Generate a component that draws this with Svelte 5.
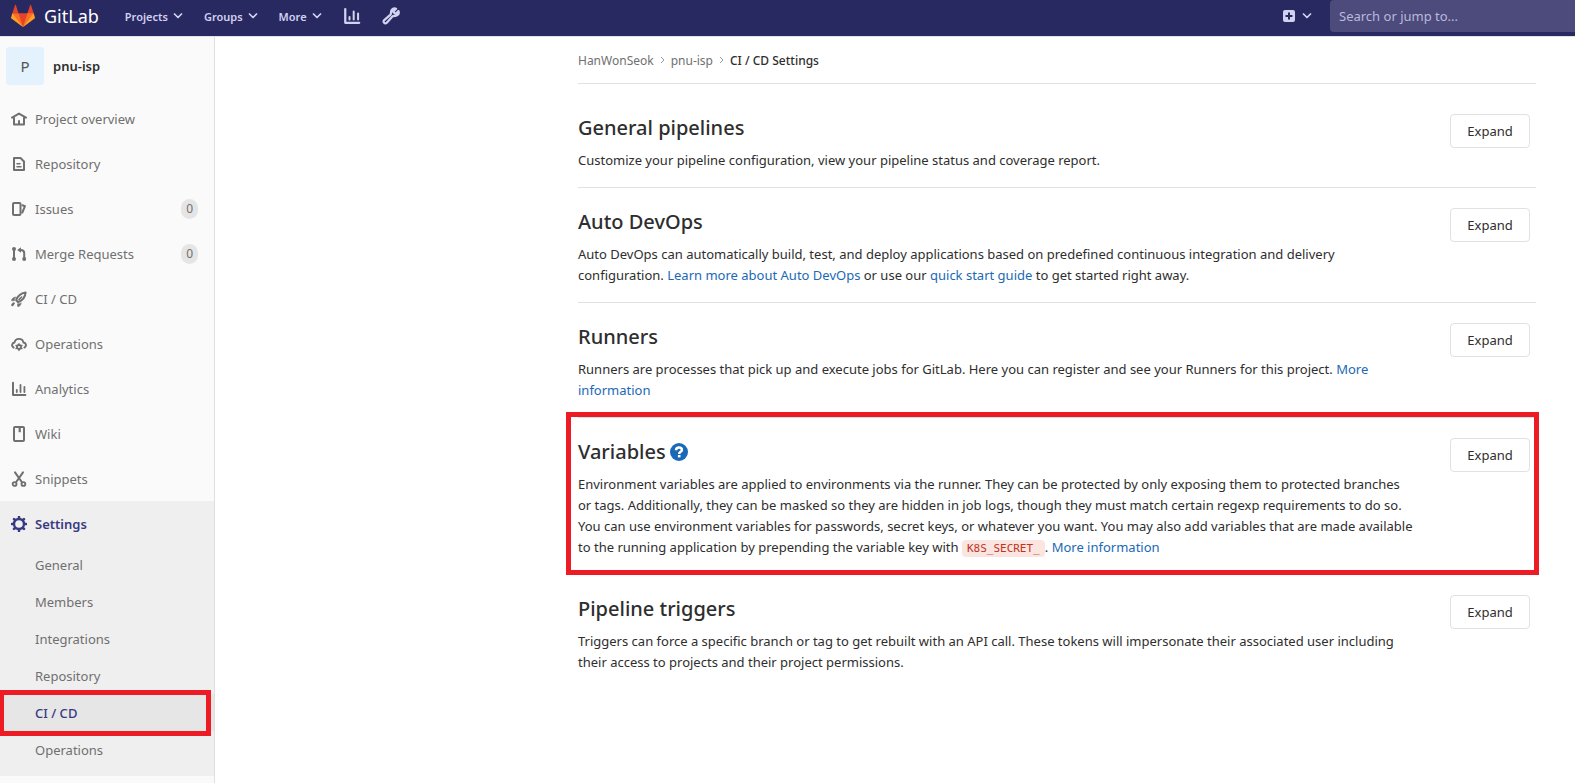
<script>
  const menus = ['Projects', 'Groups', 'More'];
  const nav = [
    { label: 'Project overview', icon: 'home' },
    { label: 'Repository', icon: 'doc' },
    { label: 'Issues', icon: 'issues', count: 0 },
    { label: 'Merge Requests', icon: 'merge', count: 0 },
    { label: 'CI / CD', icon: 'rocket' },
    { label: 'Operations', icon: 'cloud' },
    { label: 'Analytics', icon: 'chart' },
    { label: 'Wiki', icon: 'book' },
    { label: 'Snippets', icon: 'scissors' }
  ];
  const settings = ['General', 'Members', 'Integrations', 'Repository', 'CI / CD', 'Operations'];
</script>

{#snippet icon(name)}
  <svg class="icon" viewBox="0 0 16 16" aria-hidden="true" fill="none" stroke="currentColor" stroke-width="2" stroke-linecap="round" stroke-linejoin="round">
    {#if name === 'home'}
      <path d="M1 6.6 8 2.6l7 4M3 7v6.5h10V7" />
      <path d="M8 10v3" />
    {:else if name === 'doc'}
      <path d="M3 2h6.5L13 5.5V14H3z" />
      <path d="M6 7.8h3M6 10.8h4" stroke-width="1.5" />
    {:else if name === 'issues'}
      <rect x="2" y="2" width="7.5" height="12" rx="1" />
      <path d="M11.5 4.2 14 5.2 11.3 11.5" stroke-width="2" />
    {:else if name === 'merge'}
      <path d="M3 3.5v9M13.2 13V7q0-3-3.7-3" />
      <path d="M10 1.2v5.6L6.2 4z" fill="currentColor" stroke="none" />
      <circle cx="3" cy="3" r="1" /><circle cx="3" cy="13" r="1" /><circle cx="13.2" cy="13" r="1" />
    {:else if name === 'rocket'}
      <path d="M5.2 9.2C6.5 5.4 9.8 2.3 14.6 1.6 14.2 6 11 9.6 7.2 11.2z" stroke-width="2" />
      <path d="M8 8.6 10.6 6" stroke-width="1.6" />
      <path d="M4.3 6C2.2 6.4.8 8 .3 9.6l2.8.2zM10.2 12.2c-.2 1.8-1.6 3.2-3.4 3.6l-.3-2.6z" fill="currentColor" stroke-width="0.6" />
      <path d="M2.6 12.4 1.4 14" stroke-width="2.4" />
    {:else if name === 'cloud'}
      <path d="M2.6 11.6C.2 10 .8 6.8 3.6 6.5 4.2 1.6 11.6 1.6 12.4 6.5c2.8.3 3.5 3.5 1 5.1" stroke-width="1.9" />
      <circle cx="8" cy="11" r="2" stroke-width="1.8" />
      <path d="M8 7.8v.8M8 13.4v1.2M5 9.5l.8.4M11 9.5l-.8.4M5 12.6l.8-.4M11 12.6l-.8-.4" stroke-width="1.4" />
    {:else if name === 'chart'}
      <path d="M2 1.8V14h12.4" />
      <path d="M5.8 8.8V11M9.5 4v7M13.4 5.8V11" stroke-width="1.8" />
    {:else if name === 'book'}
      <rect x="3" y="1" width="10" height="14" rx="1" />
      <path d="M8.7 2v4.2" stroke-width="2.2" stroke-linecap="butt" />
    {:else if name === 'scissors'}
      <path d="M4 1.4 10.8 11M12 1.4 5.2 11" />
      <circle cx="3.6" cy="13" r="1.9" stroke-width="1.9" /><circle cx="12.4" cy="13" r="1.9" stroke-width="1.9" />
    {:else if name === 'gear'}
      <circle cx="8" cy="8" r="5" stroke-width="2.4" />
      <path d="M8 1v1M8 14v1M1 8h1M14 8h1M3.050 3.050l.7.7M12.250 12.250l.7.7M3.050 12.950l.7-.7M12.250 3.750l.7-.7" stroke-width="2.6" />
    {:else if name === 'wrench'}
      <path d="M14.6 3.6 12 6.2 9.9 4.1l2.6-2.6C10.3.6 7.7 2.1 8 5.2c.1.8-.1 1.200-.7 1.800L2 11.6c-1.700 1.600.6 3.900 2.300 2.300L9 8.700c.6-.6 1-.8 1.800-.7 3.100.2 4.800-2 3.800-4.400z" stroke-width="2" />
    {/if}
  </svg>
{/snippet}

{#snippet chevron()}
  <svg class="chevron" viewBox="0 0 10 6" aria-hidden="true"><path d="m1.5 1 3.5 3.5L8.500 1" fill="none" stroke="currentColor" stroke-width="1.7" stroke-linecap="round" stroke-linejoin="round" /></svg>
{/snippet}

<div class="page">
  <header class="navbar">
    <a class="brand" href="#home">
      <svg class="logo" viewBox="0 0 36 36" aria-hidden="true">
        <path fill="#e24329" d="M2 14l9.38 9v-9l-4-12.28c-.205-.632-1.176-.632-1.38 0zM34 14l-9.38 9v-9l4-12.28c.205-.632 1.176-.632 1.38 0zM18 34.38 3 14h30z" />
        <path fill="#fc6d26" d="M18 34.38 11.38 14H2l4 11zM18 34.38 24.62 14H34l-4 11z" />
        <path fill="#fca326" d="M2 14 .1 20.160c-.18.565 0 1.2.5 1.560L18 34.380zM34 14l1.900 6.160c.18.565 0 1.2-.5 1.560L18 34.380z" />
      </svg>
      <span>GitLab</span>
    </a>
    <nav class="menus" aria-label="Main">
      {#each menus as menu}
        <button type="button">{menu}{@render chevron()}</button>
      {/each}
      <a class="tool" href="#analytics" aria-label="Analytics">{@render icon('chart')}</a>
      <a class="tool" href="#admin" aria-label="Admin area">{@render icon('wrench')}</a>
    </nav>
    <button class="new" type="button" aria-label="New">
      <svg class="plus" viewBox="0 0 12 12" aria-hidden="true"><rect width="12" height="12" rx="2" fill="currentColor" /><path d="M6 2.500v7M2.500 6h7" stroke="#292961" stroke-width="2" /></svg>
      {@render chevron()}
    </button>
    <input class="search" type="text" placeholder="Search or jump to..." aria-label="Search or jump to" />
  </header>

  <div class="body">
    <aside class="sidebar">
      <a class="project" href="#project">
        <span class="avatar">P</span>
        <span>pnu-isp</span>
      </a>
      <ul>
        {#each nav as item}
          <li>
            <a class="item" href="#{item.icon}">
              {@render icon(item.icon)}
              <span class="label">{item.label}</span>
              {#if item.count !== undefined}<span class="count">{item.count}</span>{/if}
            </a>
          </li>
        {/each}
        <li class="open">
          <a class="item current" href="#settings">{@render icon('gear')}<span class="label">Settings</span></a>
          <ul class="sub">
            {#each settings as item}
              <li class:active={item === 'CI / CD'}><a href="#settings">{item}</a></li>
            {/each}
          </ul>
        </li>
      </ul>
    </aside>

    <main>
      <nav class="crumbs" aria-label="Breadcrumb">
        <a href="#owner">HanWonSeok</a>
        <svg viewBox="0 0 5 8" aria-hidden="true"><path d="m1 1 3 3-3 3" /></svg>
        <a href="#project">pnu-isp</a>
        <svg viewBox="0 0 5 8" aria-hidden="true"><path d="m1 1 3 3-3 3" /></svg>
        <strong>CI / CD Settings</strong>
      </nav>

      <section>
        <div class="text">
          <h4>General pipelines</h4>
          <p>Customize your pipeline configuration, view your pipeline status and coverage report.</p>
        </div>
        <button type="button">Expand</button>
      </section>

      <section>
        <div class="text">
          <h4>Auto DevOps</h4>
          <p>
            Auto DevOps can automatically build, test, and deploy applications based on predefined continuous integration and delivery<br />
            configuration. <a href="#autodevops">Learn more about Auto DevOps</a> or use our <a href="#quickstart">quick start guide</a> to get started right away.
          </p>
        </div>
        <button type="button">Expand</button>
      </section>

      <section>
        <div class="text">
          <h4>Runners</h4>
          <p>
            Runners are processes that pick up and execute jobs for GitLab. Here you can register and see your Runners for this project. <a href="#runners">More<br />information</a>
          </p>
        </div>
        <button type="button">Expand</button>
      </section>

      <section class="marked">
        <div class="text">
          <h4>
            Variables
            <a class="help" href="#variables" aria-label="Help">
              <svg viewBox="0 0 18 18" aria-hidden="true">
                <circle cx="9" cy="9" r="9" fill="currentColor" />
                <path d="M6 7.300C6.100 5.300 7.400 4.500 9 4.500c1.700 0 2.900 1 2.900 2.400C11.900 8.900 9.200 8.800 9.200 11" fill="none" stroke="#fff" stroke-width="2.500" />
                <path d="M7.900 12h2.600v2.400H7.900z" fill="#fff" />
              </svg>
            </a>
          </h4>
          <p>
            Environment variables are applied to environments via the runner. They can be protected by only exposing them to protected branches<br />
            or tags. Additionally, they can be masked so they are hidden in job logs, though they must match certain regexp requirements to do so.<br />
            You can use environment variables for passwords, secret keys, or whatever you want. You may also add variables that are made available<br />
            to the running application by prepending the variable key with <code>K8S_SECRET_</code>. <a href="#variables">More information</a>
          </p>
        </div>
        <button type="button">Expand</button>
      </section>

      <section>
        <div class="text">
          <h4>Pipeline triggers</h4>
          <p>
            Triggers can force a specific branch or tag to get rebuilt with an API call. These tokens will impersonate their associated user including<br />
            their access to projects and their project permissions.
          </p>
        </div>
        <button type="button">Expand</button>
      </section>
    </main>
  </div>
</div>

<style>
  :global(body) {
    margin: 0;
    background: #fff;
  }
  .page {
    display: flex;
    flex-direction: column;
    min-height: 100vh;
    color: #2e2e2e;
    font: 13px/21px 'Noto Sans', 'Open Sans', sans-serif;
    overflow-x: hidden;
  }
  .page :is(a, button) {
    color: inherit;
    font: inherit;
    text-decoration: none;
  }
  .page button {
    padding: 0;
    border: 0;
    background: none;
    cursor: pointer;
  }
  ul {
    margin: 0;
    padding: 0;
    list-style: none;
  }
  .icon {
    flex: none;
    width: 16px;
    height: 16px;
  }

  .navbar {
    display: flex;
    align-items: center;
    box-sizing: border-box;
    height: 36px;
    padding-left: 11px;
    padding-bottom: 4px;
    background: #292961;
    color: #d1d1f0;
  }
  .page .brand {
    display: flex;
    align-items: center;
    gap: 9px;
    color: #fff;
    font-size: 18px;
  }
  .logo {
    width: 24px;
    height: 24px;
  }
  .menus {
    display: flex;
    align-items: center;
    gap: 21px;
    margin: 0 auto 0 26px;
  }
  .page .menus button {
    display: flex;
    align-items: center;
    gap: 5px;
    font-size: 11px;
    font-weight: 600;
  }
  .chevron {
    width: 10px;
    height: 6px;
  }
  .tool {
    display: flex;
  }
  .tool .icon {
    width: 18px;
    height: 18px;
  }
  .page .new {
    display: flex;
    align-items: center;
    gap: 7px;
    margin-right: 18px;
  }
  .plus {
    width: 12px;
    height: 12px;
  }
  .search {
    box-sizing: border-box;
    width: 245px;
    height: 32px;
    padding: 0 9px;
    border: 0;
    border-radius: 4px 0 0 4px;
    background: #4c4b7b;
    color: #fff;
    font: inherit;
  }
  .search::placeholder {
    color: #b9b9dc;
  }

  .body {
    display: flex;
    flex: 1;
    border-top: 1px solid #e1e1e8;
  }
  .sidebar {
    flex: none;
    width: 214px;
    border-right: 1px solid #dfdfdf;
    background: #fafafa;
    color: #707070;
  }
  .page .project {
    display: flex;
    align-items: center;
    gap: 9px;
    padding: 10px 6px 11px;
    color: #2e2e2e;
    font-weight: 600;
  }
  .avatar {
    display: grid;
    place-items: center;
    width: 38px;
    height: 38px;
    border-radius: 3px;
    background: #e3f2fd;
    color: #555;
    font-size: 15px;
    font-weight: 400;
  }
  .item {
    display: flex;
    align-items: center;
    gap: 8px;
    height: 45px;
    padding: 0 16px 0 11px;
  }
  .label {
    flex: 1;
    padding-top: 2px;
  }
  .count {
    padding: 0 5px;
    border-radius: 10px;
    background: #e5e5e5;
    font-size: 12px;
    line-height: 20px;
  }
  .open {
    padding-bottom: 8px;
    background: #efefef;
  }
  .page .current {
    color: #393982;
    font-weight: 600;
  }
  .sub a {
    display: block;
    padding: 9px 16px 7px 35px;
  }
  .active {
    position: relative;
    background: #e6e6e6;
    color: #393982;
    font-weight: 500;
  }
  .active::after {
    position: absolute;
    inset: -4px 3px -5px -1px;
    border: 5px solid #ed1c24;
    content: '';
    pointer-events: none;
  }

  main {
    flex: 1;
    min-width: 0;
    margin: 0 39px 0 363px;
  }
  .crumbs {
    display: flex;
    align-items: center;
    gap: 6px;
    height: 46px;
    margin-bottom: 10px;
    border-bottom: 1px solid #e1e1e1;
    color: #707070;
    font-size: 12px;
  }
  .crumbs svg {
    width: 5px;
    height: 8px;
    fill: none;
    stroke: #999;
  }
  .crumbs strong {
    color: #2e2e2e;
    font-weight: 500;
  }
  section {
    position: relative;
    display: flex;
    justify-content: space-between;
    align-items: flex-start;
    padding: 20px 6px 16px 0;
    border-bottom: 1px solid #e1e1e1;
  }
  section:last-child {
    border-bottom: 0;
  }
  .marked::after {
    position: absolute;
    inset: -6px -3px -1px -12px;
    border: 5px solid #ed1c24;
    content: '';
    pointer-events: none;
  }
  h4 {
    display: flex;
    align-items: center;
    gap: 4px;
    margin: 0 0 8px;
    font-size: 20px;
    font-weight: 500;
    line-height: 28px;
  }
  p {
    margin: 0;
    white-space: nowrap;
  }
  .page p a,
  .page .help {
    color: #1b69b6;
  }
  .help svg {
    display: block;
    width: 18px;
    height: 18px;
  }
  code {
    padding: 2px 5px;
    border-radius: 4px;
    background: #fbe5e1;
    color: #c0341d;
    font: 11px/16px 'DejaVu Sans Mono', monospace;
  }
  .page section > button {
    flex: none;
    box-sizing: border-box;
    min-width: 80px;
    height: 34px;
    padding: 0 16px;
    border: 1px solid #e1e1e1;
    border-radius: 4px;
    background: #fff;
  }
</style>
